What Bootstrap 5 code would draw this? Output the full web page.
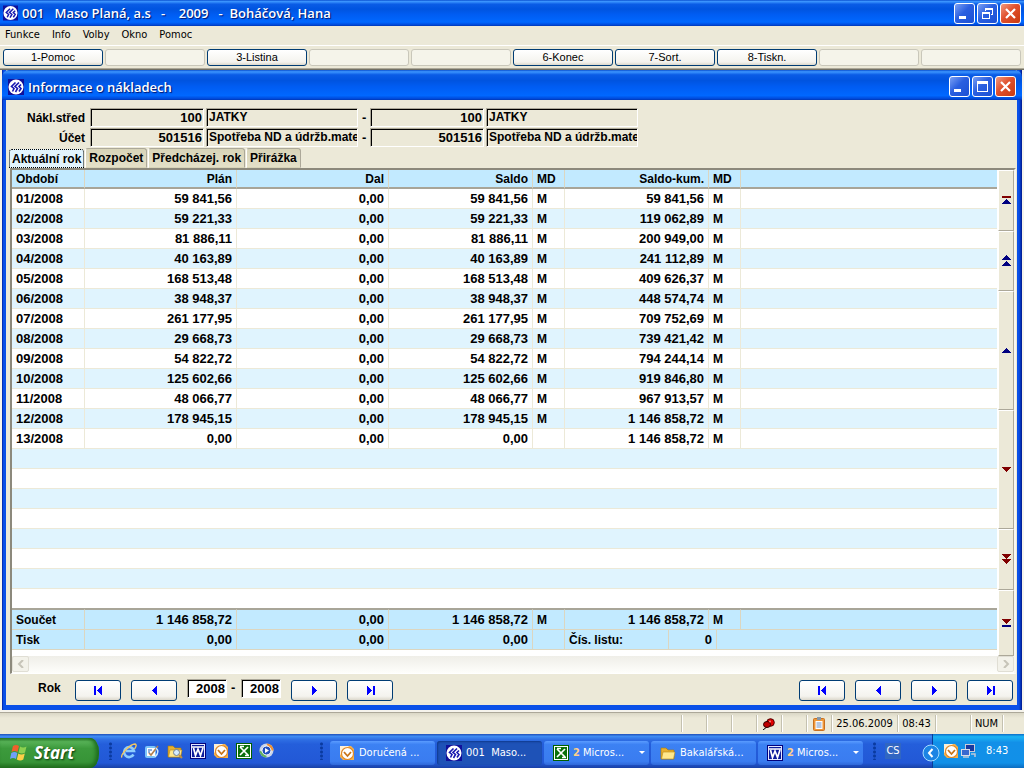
<!DOCTYPE html>
<html lang="cs">
<head>
<meta charset="utf-8">
<meta name="viewport" content="width=device-width, initial-scale=1">
<title>Informace o nákladech</title>
<link href="https://cdn.jsdelivr.net/npm/bootstrap@5.3.0/dist/css/bootstrap.min.css" rel="stylesheet">
<style>
:root{--face:#ece9d8;--ui:"DejaVu Sans Condensed","DejaVu Sans",sans-serif;--grid:"Liberation Sans",Arial,sans-serif;--cap:"Open Sans","Noto Sans",sans-serif}
body{background:var(--face);color:#000;font:11px/16px var(--ui)}
button,input{font:inherit;color:inherit}
button{padding:0;border:0;background:none}
svg{display:block;flex:none}
.caption-bar{background:linear-gradient(#0a50d0 0,#3c96ff 6%,#0a5ce6 16%,#0054e0 35%,#005cf2 55%,#0068ff 85%,#0048d8 96%,#0036b0 100%);color:#fff;font:600 13px/20px var(--cap);text-shadow:1px 1px 1px #00136b;white-space:nowrap}
.app-caption{height:26px;padding:0 3px 0 3px}
.caption-bar h1,.caption-bar h2{font:inherit;margin:0}
.cap-btn{width:21px;height:21px;border:1px solid #fff;border-radius:3px;background:linear-gradient(135deg,#7aa0f4,#2a5fe0 45%,#1c50d4);display:grid;place-items:center}
.cap-close{background:linear-gradient(135deg,#f09a80,#e0502c 45%,#c83a10)}
.menu-row{height:20px;padding:1px 0 0 5px;border-bottom:1px solid #fff}
.menu-row a{color:#000;text-decoration:none}
.key-row{height:23px;padding:3px 3px 0;background:var(--face);display:grid;grid-template-columns:repeat(10,1fr);gap:2px;border-bottom:1px solid #aca899}
.xp-btn{border:1px solid #003c74;border-radius:3px;background:linear-gradient(#fff,#f4f3ee 80%,#dcd8cc);font:11px/15px var(--grid)}
.key-row .xp-btn{height:17px}
.xp-btn:disabled{border-color:#c9c7ba;background:#f5f4ea}
.desk{padding:0 2px 2px;background:#f6f4ec;border-top:1px solid #716f64}
.child{border:solid #0842dc;border-width:0 5px 5px 4px;border-image:linear-gradient(90deg,#0020a0,#0a50e8 2px,#0a50e8 calc(100% - 3px),#00188c) 5;background:var(--face)}
.child-caption{height:30px;margin:0 -5px 0 -4px;padding:3px 6px 0 6px;border-radius:7px 7px 0 0}
.inner{padding:8px 1px 0 4px;font:700 13px/16px var(--grid)}
.crit{display:grid;grid-template-columns:78px 114px 152px 8px 114px 152px;column-gap:2px;row-gap:1px;align-items:center}
.crit label{text-align:right;padding-right:3px}
.crit label,.crit .txt,.tab-btn,.nav-row label,.cost-table th,.cost-table .cap{font-size:12px}
.crit span{padding-left:2px}
.fld{width:100%;height:19px;border:1px solid;border-color:#aca899 #fff #fff #aca899;box-shadow:inset 1px 1px #000;border-radius:0;background:var(--face);padding:0 1px 0 3px;font-weight:700;outline:0}
.fld.txt{padding:0 0 2px 2px}
.tabs{padding-top:1px;margin-left:-2px;height:21px;gap:1px}
.tab-btn{height:20px;font-weight:700;line-height:18px;padding:0 3px;border:1px solid;border-color:#aca899 #aca899 transparent #fff;border-radius:3px 3px 0 0;background:linear-gradient(#d8d4b8,#e4e0c8);white-space:nowrap}
.tab-btn.active{background:#e2f4fd;padding:0 2px;border:1px dotted #000;height:19px;margin-top:1px;margin-left:1px}
.pane{border:solid;border-width:2px 2px 1px;border-color:#8c897c #f8f7f0 #fff #8c897c;background:#fff}
.cost-table{width:100%;table-layout:fixed;border-collapse:separate;border-spacing:0}
.cost-table th,.cost-table td{height:20px;padding:1px 4px 0;border-right:1px solid #ece9d8;border-bottom:1px solid #ece9d8;line-height:18px;text-align:right;white-space:nowrap;font-weight:700}
.cost-table .l{text-align:left}
.cost-table tr>:last-child{border-right:0}
.cost-table thead th{height:19px;line-height:16px;padding-bottom:0;background:#c2eaff;border-color:#dcd6c0;border-bottom:2px solid #a8a598}
.cost-table tbody tr:nth-child(even) td{background:#e0f4fe}
.cost-table tbody tr.blank td{border-right:0}
.cost-table tbody tr:last-child td{border-bottom-color:#a8a598}
.cost-table tfoot td{background:#c2eaff;border-color:#dcd6c0}
.cost-table tfoot tr:first-child td{border-top:1px solid #a8a598;height:21px}
.pager{width:17px;flex:none;border-left:1px solid #fff;background:var(--face)}
.pager button{display:grid;place-items:center;width:100%;border:1px solid;border-color:#fff #aca899 #aca899 #fff;min-height:0}
.g60{flex:60 1 0}.g120{flex:120 1 0}.g66{flex:66 1 0}
.hbar{height:17px;background:linear-gradient(#efeee8,#fefefb);padding:0 0 1px}
.hbar button{width:17px;height:16px;border:1px solid #e0ded4;border-radius:2px;background:#f3f2ea;display:grid;place-items:center}
.nav-row{height:31px;padding:6px 3px 0 28px}
.nav-row .xp-btn{width:46px;height:21px;display:grid;place-items:center}
.year{width:40px;height:19px;border:1px solid;border-color:#aca899 #fff #fff #aca899;box-shadow:inset 1px 1px #000;background:#fff;font-weight:700;text-align:right;padding:0 1px 0 3px;border-radius:0;margin-top:-1px}
.status{height:22px;border-top:1px solid #aca899;background:linear-gradient(#dad7c6,#ece9d8 5px);line-height:17px;padding:2px 0}
.status>span{border-left:1px solid #c4c1b0;box-shadow:inset 1px 0 #fff;height:17px;display:flex;align-items:center;justify-content:center;flex:none}
.w25{width:25px}.w35{width:35px}.w66{width:66px}.w38{width:38px}.w32{width:32px}.w22{width:22px}
.taskbar{height:34px;background:linear-gradient(#1f4fb8 0,#3f8cf3 7%,#2f6fe4 16%,#245edb 30%,#2258d6 85%,#1941a5);color:#fff;white-space:nowrap}
.start{width:99px;height:30px;margin-top:4px;padding-left:10px;border-radius:0 9px 9px 0/0 14px 14px 0;background:linear-gradient(#2f7d2f,#57b257 12%,#3c9a3c 35%,#379437 80%,#23701f);box-shadow:inset -3px 0 4px #1c6a1c;font:italic 700 17px/24px var(--cap);text-shadow:1px 1px 2px #0a3a0a}
.grip{width:5px;height:18px;background:radial-gradient(circle,#0a3aa0 1px,transparent 2px) 0 0/5px 4px;flex:none}
.quick{gap:7px}
.task{width:105px;height:24px;margin-top:4px;border-radius:3px;background:linear-gradient(#5a9cff,#3c81f3 15%,#3a7cf0 85%,#2f68d8);padding-left:9px;gap:4px;flex:none}
.task.on{background:#1e52b7;box-shadow:inset 1px 1px 2px #103a8c}
.task b{color:#ffd08a;font-weight:700}
.tray{background:linear-gradient(#0c6cc8 0,#1cb4f4 8%,#1290e8 25%,#1190e8 85%,#0c6cc0);border-left:1px solid #0a3c98;width:92px;padding-left:10px;gap:1px;position:relative}
.chev{position:absolute;left:-11px;top:10px}
.lang{background:#3166c2;width:16px;height:16px;line-height:15px;text-align:center}
</style>
</head>
<body>
<svg width="0" height="0" class="position-absolute" aria-hidden="true">
<symbol id="app" viewBox="0 0 16 16"><rect width="16" height="16" fill="#10109a"/><circle cx="8" cy="8" r="7.5" fill="#fff"/><path d="M7.500 3.500 3.500 7.500 6 9.500 4.500 12.500M11 3.500 7 7.500l2.500 2L7.500 13M13 5.500l-2 2 2 2-2 3" fill="none" stroke="#1818b0" stroke-width="1.600"/></symbol>
<symbol id="up" viewBox="0 0 9 5"><path d="M4 0h1v1h1v1h1v1h1v1h1v1H0V4h1V3h1V2h1V1h1z" fill="#000080"/></symbol>
<symbol id="dn" viewBox="0 0 9 5"><path d="M0 0h9v1H8v1H7v1H6v1H5v1H4V4H3V3H2V2H1V1H0z" fill="#800000"/></symbol>
<symbol id="prev" viewBox="0 0 9 9"><path d="M7 0v9H6V8H5V7H4V6H3V5H2V4h1V3h1V2h1V1h1V0z" fill="#00f"/></symbol>
<symbol id="next" viewBox="0 0 9 9"><path d="M2 0v9h1V8h1V7h1V6h1V5h1V4H6V3H5V2H4V1H3V0z" fill="#00f"/></symbol>
<symbol id="first" viewBox="0 0 9 9"><path d="M0 0h2v9H0zM8 0v9H7V8H6V7H5V6H4V5H3V4h1V3h1V2h1V1h1V0z" fill="#00f"/></symbol>
<symbol id="last" viewBox="0 0 9 9"><path d="M7 0h2v9H7zM1 0v9h1V8h1V7h1V6h1V5h1V4H5V3H4V2H3V1H2V0z" fill="#00f"/></symbol>
<symbol id="min" viewBox="0 0 13 13"><path d="M1 9h7v3H1z" fill="#fff"/></symbol>
<symbol id="max" viewBox="0 0 13 13"><path d="M1 1h11v11H1zM2 4v7h9V4z" fill="#fff" fill-rule="evenodd"/></symbol>
<symbol id="rest" viewBox="0 0 13 13"><path d="M4 1h8v7h-2V7h1V3H5v1H4zM1 5h8v7H1zM2 7v4h6V7z" fill="#fff" fill-rule="evenodd"/></symbol>
<symbol id="x" viewBox="0 0 13 13"><path d="m2 2 9 9m0-9-9 9" stroke="#fff" stroke-width="2.2"/></symbol>
<symbol id="olk" viewBox="0 0 16 16"><path d="M1 1h11l3 3v11H4l-3-3z" fill="#f6b24c"/><path d="M1 1h9l-9 9z" fill="#fff1d8"/><circle cx="8.5" cy="8.5" r="6" fill="#fff" stroke="#e08a28" stroke-width="1.2"/><path d="m5 7 3.5 4L12 7" fill="none" stroke="#c87418" stroke-width="1.8"/></symbol>
<symbol id="word" viewBox="0 0 16 16"><rect width="16" height="16" fill="#00007c"/><rect x="1.500" y="1.500" width="13" height="13" fill="#0c1c9c" stroke="#e4e8ff"/><path d="M2 4h12M3.500 5 5.500 12.500 8 6l2.500 6.500L13 5" fill="none" stroke="#fff" stroke-width="1.700"/></symbol>
<symbol id="excel" viewBox="0 0 16 16"><rect width="16" height="16" fill="#006000"/><rect x="1.500" y="1.500" width="13" height="13" fill="#0b700b" stroke="#fff"/><path d="m4 4 8 8m0-8-8 8M4 3.500h4m1 9h4" stroke="#fff" stroke-width="1.700"/></symbol>
<symbol id="fold" viewBox="0 0 16 16"><path d="M1 3h5l2 2h6v9H1z" fill="#e8b030" stroke="#a87808" stroke-width=".6"/><path d="M3 7h12l-1.500 7H1.500z" fill="#ffe88c" stroke="#b88a18" stroke-width=".6"/></symbol>
</svg>

<div class="min-vh-100 d-flex flex-column">
<header>
<div class="caption-bar app-caption d-flex align-items-center">
<svg width="15" height="16"><use href="#app"/></svg>
<h1 class="d-flex flex-grow-1 ps-1" style="white-space:pre"><span>001   Maso Planá, a.s   -    2009   -  Boháčová, Hana</span></h1>
<div class="d-flex" style="gap:2px">
<button class="cap-btn" aria-label="Minimalizovat"><svg width="13" height="13"><use href="#min"/></svg></button>
<button class="cap-btn" aria-label="Obnovit"><svg width="13" height="13"><use href="#rest"/></svg></button>
<button class="cap-btn cap-close" aria-label="Zavřít"><svg width="13" height="13"><use href="#x"/></svg></button>
</div></div>
<nav class="menu-row d-flex" style="gap:12px"><a href="#">Funkce</a><a href="#">Info</a><a href="#">Volby</a><a href="#">Okno</a><a href="#">Pomoc</a></nav>
<div class="key-row">
<button class="xp-btn">1-Pomoc</button><button class="xp-btn" disabled></button><button class="xp-btn">3-Listina</button><button class="xp-btn" disabled></button><button class="xp-btn" disabled></button><button class="xp-btn">6-Konec</button><button class="xp-btn">7-Sort.</button><button class="xp-btn">8-Tiskn.</button><button class="xp-btn" disabled></button><button class="xp-btn" disabled></button>
</div>
</header>

<main class="desk">
<section class="child">
<div class="caption-bar child-caption d-flex align-items-center">
<svg width="16" height="16"><use href="#app"/></svg>
<h2 class="flex-grow-1 ps-1">Informace o nákladech</h2>
<div class="d-flex" style="gap:2px">
<button class="cap-btn" aria-label="Minimalizovat"><svg width="13" height="13"><use href="#min"/></svg></button>
<button class="cap-btn" aria-label="Maximalizovat"><svg width="13" height="13"><use href="#max"/></svg></button>
<button class="cap-btn cap-close" aria-label="Zavřít"><svg width="13" height="13"><use href="#x"/></svg></button>
</div></div>
<div class="inner">
<div class="crit">
<label for="s1">Nákl.střed</label><input class="fld text-end" id="s1" value="100" readonly><input class="fld txt" aria-label="Název střediska od" value="JATKY" readonly><span>-</span><input class="fld text-end" aria-label="Středisko do" value="100" readonly><input class="fld txt" aria-label="Název střediska do" value="JATKY" readonly>
<label for="u1">Účet</label><input class="fld text-end" id="u1" value="501516" readonly><input class="fld txt" aria-label="Název účtu od" value="Spotřeba ND a údržb.materiál" readonly><span>-</span><input class="fld text-end" aria-label="Účet do" value="501516" readonly><input class="fld txt" aria-label="Název účtu do" value="Spotřeba ND a údržb.materiál" readonly>
</div>
<div class="tabs d-flex"><button class="tab-btn active">Aktuální rok</button><button class="tab-btn">Rozpočet</button><button class="tab-btn">Předcházej. rok</button><button class="tab-btn">Přirážka</button></div>
<div class="pane">
<div class="d-flex">
<div class="flex-grow-1" style="padding-bottom:6px">
<table class="cost-table">
<colgroup><col style="width:73px"><col style="width:152px"><col style="width:152px"><col style="width:144px"><col style="width:32px"><col style="width:104px"><col style="width:40px"><col style="width:8px"><col style="width:24px"><col></colgroup>
<thead><tr><th class="l">Období</th><th>Plán</th><th>Dal</th><th>Saldo</th><th class="l">MD</th><th colspan="2">Saldo-kum.</th><th class="l" colspan="2">MD</th><th></th></tr></thead>
<tbody id="rows"></tbody>
<tfoot>
<tr><td class="l cap">Součet</td><td>1 146 858,72</td><td>0,00</td><td>1 146 858,72</td><td class="l cap">M</td><td colspan="2">1 146 858,72</td><td class="l cap" colspan="2">M</td><td></td></tr>
<tr><td class="l cap">Tisk</td><td>0,00</td><td>0,00</td><td>0,00</td><td></td><td class="l cap">Čís. listu:</td><td colspan="2">0</td><td colspan="2"></td></tr>
</tfoot>
</table></div>
<div class="pager d-flex flex-column">
<button class="g60" aria-label="Na začátek"><svg width="9" height="8"><path d="M0 0h9v2H0z" fill="#800000"/><use href="#up" y="3" width="9" height="5"/></svg></button>
<button class="g60" aria-label="O stránku výš"><svg width="9" height="11"><use href="#up" width="9" height="5"/><use href="#up" y="6" width="9" height="5"/></svg></button>
<button class="g120" aria-label="Výš"><svg width="9" height="5"><use href="#up"/></svg></button>
<button class="g120" aria-label="Níž"><svg width="9" height="5"><use href="#dn"/></svg></button>
<button class="g60" aria-label="O stránku níž"><svg width="9" height="10"><use href="#dn" width="9" height="5"/><use href="#dn" y="5" width="9" height="5"/></svg></button>
<button class="g66" aria-label="Na konec"><svg width="9" height="8"><use href="#dn" width="9" height="5"/><path d="M0 6h9v2H0z" fill="#000080"/></svg></button>
</div></div>
<div class="hbar d-flex justify-content-between"><button aria-label="Vlevo"><svg width="8" height="8"><path d="M6 0 2 4l4 4" fill="none" stroke="#c6c4b8" stroke-width="2"/></svg></button><button aria-label="Vpravo"><svg width="8" height="8"><path d="m2 0 4 4-4 4" fill="none" stroke="#c6c4b8" stroke-width="2"/></svg></button></div>
</div>
<div class="nav-row d-flex align-items-start" style="gap:10px">
<label for="y1" style="width:27px">Rok</label>
<button class="xp-btn" aria-label="První rok"><svg width="9" height="9"><use href="#first"/></svg></button><button class="xp-btn" aria-label="Předchozí rok"><svg width="9" height="9"><use href="#prev"/></svg></button>
<div class="d-flex" style="gap:4px"><input class="year" id="y1" value="2008"><span style="width:6px">-</span><input class="year" aria-label="Rok do" value="2008"></div>
<button class="xp-btn" aria-label="Další rok"><svg width="9" height="9"><use href="#next"/></svg></button><button class="xp-btn me-auto" aria-label="Poslední rok"><svg width="9" height="9"><use href="#last"/></svg></button>
<button class="xp-btn" aria-label="První"><svg width="9" height="9"><use href="#first"/></svg></button><button class="xp-btn" aria-label="Předchozí"><svg width="9" height="9"><use href="#prev"/></svg></button><button class="xp-btn" aria-label="Další"><svg width="9" height="9"><use href="#next"/></svg></button><button class="xp-btn" aria-label="Poslední"><svg width="9" height="9"><use href="#last"/></svg></button>
</div>
</div>
</section>
</main>

<div class="status d-flex justify-content-end">
<span class="w25"></span><span class="w25"></span><span class="w25"></span>
<span class="w25"><svg width="12" height="12"><path d="M0 12 5 8" stroke="#000"/><circle cx="7.500" cy="4.500" r="3.800" fill="#e00000" stroke="#500000"/><ellipse cx="4" cy="6.500" rx="3.500" ry="3" fill="#c00000" stroke="#300000"/><circle cx="7" cy="3.500" r="1" fill="#ff8080"/></svg></span>
<span class="w25"></span>
<span class="w25"><svg width="12" height="14"><rect x=".5" y="1.500" width="11" height="12" rx="1" fill="#f09838" stroke="#c87020"/><path d="M2.500 4h7v8h-7z" fill="#fff"/><path d="M3.500 6h5m-5 2h5m-5 2h5" stroke="#7090c0"/><path d="M4 0h4v3H4z" fill="#8898a8"/></svg></span>
<span class="w66">25.06.2009</span><span class="w38">08:43</span><span class="w35"></span><span class="w32">NUM</span><span class="w22"></span>
</div>

<footer class="taskbar d-flex align-items-center mt-auto">
<button class="start d-flex align-items-center text-white" style="gap:5px"><svg width="19" height="18" viewBox="0 0 19 18"><path d="M3 2q3-2 6 0L7.500 8q-3-2-6 0z" fill="#f0602c"/><path d="M10 2.500q3 2 6.500 0L15 8.500q-3 2-6.500 0z" fill="#8cd050"/><path d="M1.300 9q3-2 6 0L6 15q-3-2-6 0z" fill="#70a0f8"/><path d="M8.300 9.500q3 2 6.500 0l-1.500 6q-3 2-6.500 0z" fill="#fcd048"/></svg>Start</button>
<div class="grip" style="margin:0 8px 0 9px"></div>
<div class="quick d-flex">
<button aria-label="Internet Explorer"><svg width="16" height="16"><path d="M12.500 11.500A5 5 0 1 1 13 8H5" fill="none" stroke="#8cccff" stroke-width="2.600"/><path d="M1 14.500C-1 12 9 1 14 1q2.500 1-.5 5" fill="none" stroke="#f4c860" stroke-width="1.400"/></svg></button>
<button aria-label="Zobrazit plochu"><svg width="16" height="16"><rect x="1" y="3" width="11" height="12" rx="2" fill="#7cc4f8"/><path d="M3 5h8v8H3z" fill="#fff"/><path d="m5 10 2 2 7-9" fill="none" stroke="#b08050" stroke-width="1.600"/><path d="M4 7h4M4 9h2" stroke="#2060c0"/><path d="M12 5q4 4-1 9" fill="none" stroke="#c8e8ff" stroke-width="1.500"/></svg></button>
<button aria-label="Průzkumník"><svg width="16" height="16"><use href="#fold"/><circle cx="9.500" cy="9.500" r="3" fill="#d4ecff" stroke="#708090"/><path d="m12 12 3 3" stroke="#c09040" stroke-width="2"/></svg></button>
<button aria-label="Word"><svg width="16" height="16"><use href="#word"/></svg></button>
<button aria-label="Outlook"><svg width="16" height="16"><use href="#olk"/></svg></button>
<button aria-label="Excel"><svg width="16" height="16"><use href="#excel"/></svg></button>
<button aria-label="Media Player"><svg width="16" height="16"><circle cx="7.500" cy="7.500" r="7" fill="#c8d4e8"/><path d="M7.500.5a7 7 0 0 1 7 7h-4z" fill="#f09030"/><path d="M.5 7.500a7 7 0 0 0 7 7v-4z" fill="#60b060"/><circle cx="7.500" cy="7.500" r="4.500" fill="#2050c0" stroke="#fff"/><path d="m6 5 4 2.500L6 10z" fill="#fff"/></svg></button>
</div>
<div class="grip" style="margin:0 6px 0 44px"></div>
<div class="d-flex" style="gap:2px">
<button class="task d-flex align-items-center"><svg width="16" height="16"><use href="#olk"/></svg>Doručená ...</button>
<button class="task on d-flex align-items-center" style="white-space:pre"><svg width="16" height="16"><use href="#app"/></svg>001  Maso...</button>
<button class="task d-flex align-items-center"><svg width="16" height="16"><use href="#excel"/></svg><span><b>2</b> Micros...</span><svg class="ms-auto me-1" width="7" height="4"><path d="M1 0h6L4 3z" fill="#fff"/></svg></button>
<button class="task d-flex align-items-center"><svg width="16" height="16"><use href="#fold"/></svg>Bakalářská...</button>
<button class="task d-flex align-items-center"><svg width="16" height="16"><use href="#word"/></svg><span><b>2</b> Micros...</span><svg class="ms-auto me-1" width="7" height="4"><path d="M1 0h6L4 3z" fill="#fff"/></svg></button>
</div>
<div class="grip" style="margin:0 8px 0 9px"></div><span class="lang">CS</span>
<div class="tray d-flex align-items-center align-self-stretch ms-auto">
<button class="chev" aria-label="Zobrazit skryté ikony"><svg width="18" height="18"><circle cx="9" cy="9" r="8" fill="#1c84e4" stroke="#a8dcff"/><path d="M10.500 5 7 9l3.500 4" fill="none" stroke="#fff" stroke-width="2"/></svg></button>
<svg width="16" height="16"><use href="#olk"/></svg>
<svg width="16" height="16"><path d="M5 1h10v8H5z" fill="#c8ccd8"/><path d="M6 2h8v6H6z" fill="#1838a0"/><path d="M1 6h9v7H1z" fill="#d8dce8"/><path d="M2 7h7v5H2z" fill="#3868d0"/><path d="M3 14h6m2-3h4v3" stroke="#c0c8d8" stroke-width="1.500" fill="none"/></svg>
<span style="margin-left:9px">8:43</span>
</div>
</footer>
</div>

<script>
const rows = `01/2008|59 841,56|59 841,56
02/2008|59 221,33|119 062,89
03/2008|81 886,11|200 949,00
04/2008|40 163,89|241 112,89
05/2008|168 513,48|409 626,37
06/2008|38 948,37|448 574,74
07/2008|261 177,95|709 752,69
08/2008|29 668,73|739 421,42
09/2008|54 822,72|794 244,14
10/2008|125 602,66|919 846,80
11/2008|48 066,77|967 913,57
12/2008|178 945,15|1 146 858,72
13/2008|0,00|1 146 858,72`.split("\n").map(r => r.split("|"));
let html = rows.map(([m, p, k]) => `<tr><td class="l">${m}</td><td>${p}</td><td>0,00</td><td>${p}</td><td class="l cap">${p === "0,00" ? "" : "M"}</td><td colspan="2">${k}</td><td class="l cap" colspan="2">M</td><td></td></tr>`).join("");
for (let i = rows.length; i < 21; i++) html += '<tr class="blank"><td colspan="10"></td></tr>';
document.getElementById("rows").innerHTML = html;
</script>
<script src="https://cdn.jsdelivr.net/npm/bootstrap@5.3.0/dist/js/bootstrap.bundle.min.js"></script>
</body>
</html>
